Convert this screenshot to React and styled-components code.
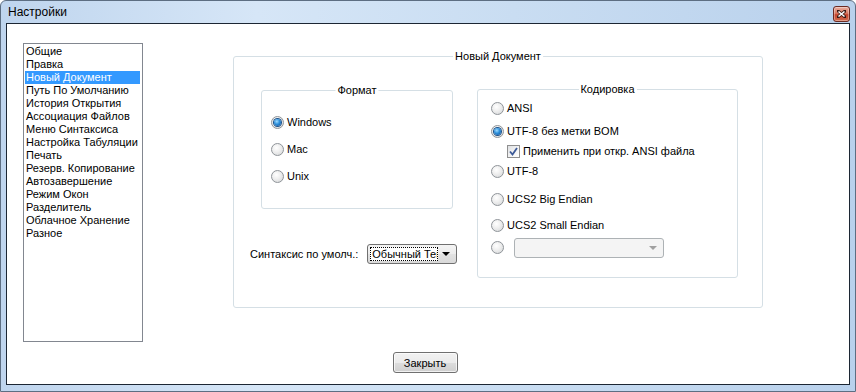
import React from "react";
import styled, { createGlobalStyle } from "styled-components";

const GlobalStyle = createGlobalStyle`
  html, body {
    margin: 0;
    padding: 0;
    background: #ffffff;
  }
  * {
    box-sizing: border-box;
  }
`;

const Window = styled.div`
  width: 856px;
  height: 392px;
  border: 1px solid #5d6e82;
  border-radius: 6px 6px 0 0;
  padding: 0 5px 6px 5px;
  background: linear-gradient(90deg, #bfd5ee 0%, #d6e6f7 30%, #c9ddf2 60%, #b9d1ec 100%);
  display: flex;
  flex-direction: column;
  font-family: "Liberation Sans", Arial, sans-serif;
  font-size: 11px;
  color: #000;
`;

const TitleBar = styled.div`
  height: 22px;
  display: flex;
  align-items: center;
  justify-content: space-between;
  padding-left: 2px;
  font-size: 12px;
`;

const CloseBtn = styled.div`
  width: 17px;
  height: 16px;
  margin-top: 4px;
  border: 1px solid #6b2a22;
  border-radius: 3px;
  background: linear-gradient(180deg, #eab0a2 0%, #d9765f 45%, #c3432c 55%, #d26a4c 100%);
  display: flex;
  align-items: center;
  justify-content: center;
  box-shadow: inset 0 0 0 1px rgba(255, 255, 255, 0.35);
`;

const Client = styled.div`
  flex: 1;
  border: 1px solid #1c2633;
  background: #ffffff;
  display: flex;
  flex-direction: column;
`;

const Body = styled.div`
  display: flex;
  align-items: flex-start;
  padding: 19px 0 0 16px;
`;

const ListBox = styled.div`
  width: 120px;
  height: 299px;
  border: 1px solid #828790;
  padding: 1px 2px 1px 1px;
  display: flex;
  flex-direction: column;
`;

const ListItem = styled.div`
  height: 13px;
  line-height: 13px;
  padding-left: 1px;
  white-space: nowrap;
  background: ${(p) => (p.$selected ? "#3399ff" : "transparent")};
  color: ${(p) => (p.$selected ? "#ffffff" : "#000000")};
`;

const Group = styled.div`
  position: relative;
  border: 1px solid #d5dfe5;
  border-radius: 3px;
  width: ${(p) => p.$w}px;
  height: ${(p) => p.$h}px;
`;

const Caption = styled.span`
  position: absolute;
  top: -8px;
  left: 50%;
  transform: translateX(-50%);
  background: #ffffff;
  padding: 0 2px;
  line-height: 14px;
  white-space: nowrap;
`;

const MainGroup = styled(Group)`
  margin: 13px 0 0 90px;
  display: flex;
  align-items: flex-start;
  padding: 33px 0 0 16px;
`;

const LeftColumn = styled.div`
  width: 203px;
  display: flex;
  flex-direction: column;
`;

const FormatGroup = styled(Group)`
  margin-left: 11px;
  display: flex;
  flex-direction: column;
  padding: 25px 0 0 9px;
  gap: 14px;
`;

const EncodingGroup = styled(Group)`
  margin: -1px 0 0 24px;
  display: flex;
  flex-direction: column;
  padding: 12px 0 0 13px;
`;

const Row = styled.label`
  display: flex;
  align-items: center;
  gap: 3px;
  height: 13px;
  line-height: 13px;
  white-space: nowrap;
  margin-top: ${(p) => p.$mt || 0}px;
  margin-left: ${(p) => p.$ml || 0}px;
`;

const RadioCircle = styled.span`
  width: 13px;
  height: 13px;
  flex: none;
  border-radius: 50%;
  border: 1px solid #8f9499;
  background: radial-gradient(circle at 40% 35%, #ffffff 0%, #f0f0f0 40%, #d2d4d6 100%);
  display: flex;
  align-items: center;
  justify-content: center;
  &::after {
    content: "";
    display: ${(p) => (p.$checked ? "block" : "none")};
    width: 7px;
    height: 7px;
    border-radius: 50%;
    background: radial-gradient(circle at 40% 35%, #9fdcff 0%, #2c8fdb 45%, #0b4a94 100%);
    box-shadow: 0 0 0 1px #1b5189;
  }
`;

const CheckBox = styled.span`
  width: 13px;
  height: 13px;
  flex: none;
  border: 1px solid #8f8f8f;
  background: linear-gradient(135deg, #dfe1e3 0%, #f5f5f5 60%, #ffffff 100%);
  display: flex;
  align-items: center;
  justify-content: center;
`;

const SyntaxRow = styled.div`
  display: flex;
  align-items: center;
  margin-top: 35px;
  gap: 9px;
  white-space: nowrap;
`;

const Combo = styled.div`
  width: 90px;
  height: 20px;
  border: 1px solid #707070;
  border-radius: 3px;
  background: linear-gradient(180deg, #f4f4f4 0%, #ececec 50%, #e2e2e2 51%, #d9d9d9 100%);
  display: flex;
  align-items: center;
  padding: 2px;
`;

const ComboText = styled.span`
  flex: 1;
  height: 14px;
  line-height: 12px;
  border: 1px dotted #000;
  background: #ffffff;
  overflow: hidden;
  white-space: nowrap;
  padding-left: 1px;
`;

const ComboArrow = styled.span`
  width: 16px;
  display: flex;
  justify-content: center;
  align-items: center;
  &::after {
    content: "";
    border-left: 4px solid transparent;
    border-right: 4px solid transparent;
    border-top: 4px solid ${(p) => p.$color || "#000"};
  }
`;

const DisabledCombo = styled.div`
  width: 150px;
  height: 20px;
  border: 1px solid #adb2b5;
  border-radius: 3px;
  background: #f4f4f4;
  margin-left: 7px;
  display: flex;
  justify-content: flex-end;
  align-items: center;
  padding-right: 2px;
`;

const Footer = styled.div`
  display: flex;
  justify-content: center;
  padding-right: 6px;
  margin-top: 10px;
`;

const Button = styled.button`
  width: 65px;
  height: 21px;
  border: 1px solid #707070;
  border-radius: 3px;
  background: linear-gradient(180deg, #f2f2f2 0%, #ebebeb 50%, #dddddd 51%, #cfcfcf 100%);
  font-family: "Liberation Sans", Arial, sans-serif;
  font-size: 11px;
  color: #000;
  padding: 0;
  box-shadow: inset 0 0 0 1px rgba(255, 255, 255, 0.7);
`;

const menu = [
  "Общие",
  "Правка",
  "Новый Документ",
  "Путь По Умолчанию",
  "История Открытия",
  "Ассоциация Файлов",
  "Меню Синтаксиса",
  "Настройка Табуляции",
  "Печать",
  "Резерв. Копирование",
  "Автозавершение",
  "Режим Окон",
  "Разделитель",
  "Облачное Хранение",
  "Разное",
];

const Radio = ({ checked, children, mt }) => (
  <Row $mt={mt}>
    <RadioCircle $checked={checked} />
    {children}
  </Row>
);

const App = () => {
  return (
    <>
      <GlobalStyle />
      <Window>
        <TitleBar>
          <span>Настройки</span>
          <CloseBtn>
            <svg width="9" height="8" viewBox="0 0 9 8">
              <path d="M1 1 L8 7 M8 1 L1 7" stroke="#3a1a14" strokeWidth="3" strokeLinecap="square" />
              <path d="M1.5 1.5 L7.5 6.5 M7.5 1.5 L1.5 6.5" stroke="#ffffff" strokeWidth="1.6" />
            </svg>
          </CloseBtn>
        </TitleBar>
        <Client>
          <Body>
            <ListBox>
              {menu.map((item, i) => (
                <ListItem key={i} $selected={i === 2}>
                  {item}
                </ListItem>
              ))}
            </ListBox>
            <MainGroup $w={530} $h={252}>
              <Caption>Новый Документ</Caption>
              <LeftColumn>
                <FormatGroup $w={192} $h={119}>
                  <Caption>Формат</Caption>
                  <Radio checked>Windows</Radio>
                  <Radio>Mac</Radio>
                  <Radio>Unix</Radio>
                </FormatGroup>
                <SyntaxRow>
                  <span>Синтаксис по умолч.:</span>
                  <Combo>
                    <ComboText>Обычный Текст</ComboText>
                    <ComboArrow />
                  </Combo>
                </SyntaxRow>
              </LeftColumn>
              <EncodingGroup $w={261} $h={189}>
                <Caption>Кодировка</Caption>
                <Radio>ANSI</Radio>
                <Radio checked mt={10}>UTF-8 без метки BOM</Radio>
                <Row $mt={7} $ml={16}>
                  <CheckBox>
                    <svg width="9" height="9" viewBox="0 0 9 9">
                      <path d="M1 4.5 L3.5 7.5 L8 1" fill="none" stroke="#3d5a98" strokeWidth="1.8" />
                    </svg>
                  </CheckBox>
                  Применить при откр. ANSI файла
                </Row>
                <Radio mt={7}>UTF-8</Radio>
                <Radio mt={15}>UCS2 Big Endian</Radio>
                <Radio mt={13}>UCS2 Small Endian</Radio>
                <Row $mt={9}>
                  <RadioCircle />
                  <DisabledCombo>
                    <ComboArrow $color="#a0a0a0" />
                  </DisabledCombo>
                </Row>
              </EncodingGroup>
            </MainGroup>
          </Body>
          <Footer>
            <Button>Закрыть</Button>
          </Footer>
        </Client>
      </Window>
    </>
  );
};

export default App;
